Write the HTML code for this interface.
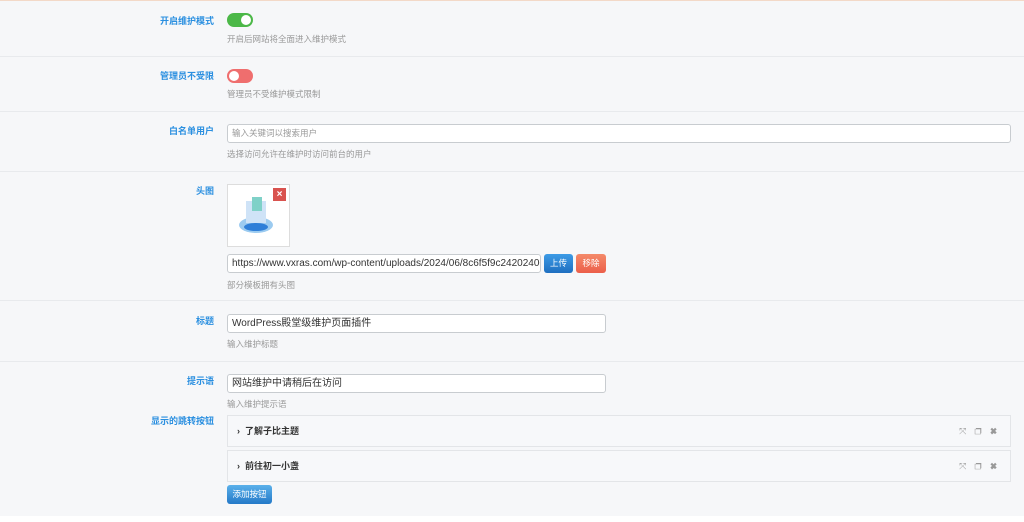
<!DOCTYPE html><html><head><meta charset="utf-8"><style>
*{margin:0;padding:0;box-sizing:border-box}
body{width:1024px;height:521px;background:#f6f7f9;font-family:"Liberation Sans","Noto Sans CJK SC",sans-serif;position:relative;overflow:hidden;border-top:1px solid #f3d9c8}
.a{position:absolute}
.lb{position:absolute;right:810px;font-size:9px;color:#2a8fe0;font-weight:bold;text-align:right;white-space:nowrap}
.ds{position:absolute;left:227px;font-size:8.5px;color:#999}
.hr{position:absolute;left:0;width:1024px;height:1px;background:#e8eaed}
.sw{position:absolute;left:227px;width:26px;height:14px;border-radius:7px}
.sw i{position:absolute;top:2px;width:10px;height:10px;border-radius:50%;background:#fff}
.in{position:absolute;left:227px;height:19px;border:1px solid #c8ccd0;border-radius:3px;background:#fff;font-size:10px;color:#333;padding:0 4px;line-height:17px;white-space:nowrap;overflow:hidden}
.box{position:absolute;left:227px;width:784px;height:32px;border:1px solid #e3e5e8;background:#f7f8fa;font-size:9px;font-weight:bold;color:#333;padding-left:9px;line-height:30px}
.ic{position:absolute;right:10px;top:0;font-size:9px;color:#999;font-weight:normal;letter-spacing:3px}
.bt{position:absolute;height:19px;border-radius:3px;color:#fff;font-size:8.5px;text-align:center;line-height:19px}
</style></head><body>
<div class="lb" style="top:13px">开启维护模式</div>
<div class="sw" style="top:12px;background:#4cb848"><i style="right:2px"></i></div>
<div class="ds" style="top:32px">开启后网站将全面进入维护模式</div>
<div class="hr" style="top:55px"></div>
<div class="lb" style="top:68px">管理员不受限</div>
<div class="sw" style="top:68px;background:#ef6e6e"><i style="left:2px"></i></div>
<div class="ds" style="top:87px">管理员不受维护模式限制</div>
<div class="hr" style="top:110px"></div>
<div class="lb" style="top:123px">白名单用户</div>
<div class="in" style="top:123px;width:784px;color:#999;font-size:8.5px">输入关键词以搜索用户</div>
<div class="ds" style="top:147px">选择访问允许在维护时访问前台的用户</div>
<div class="hr" style="top:170px"></div>
<div class="lb" style="top:183px">头图</div>
<div class="a" style="left:227px;top:183px;width:63px;height:63px;border:1px solid #ddd;background:#fff">
<svg width="61" height="61" viewBox="0 0 61 61"><ellipse cx="28" cy="40" rx="17" ry="8" fill="#5aa9e6" opacity=".6"/><rect x="18" y="16" width="20" height="22" fill="#cfe3f7"/><rect x="24" y="12" width="10" height="14" fill="#7fd1c8"/><ellipse cx="28" cy="42" rx="12" ry="4" fill="#2f7fd8"/></svg>
<div class="a" style="right:3px;top:3px;width:13px;height:13px;background:#d9534f;color:#fff;font-size:10px;line-height:13px;text-align:center;font-weight:bold">×</div></div>
<div class="in" style="top:253px;width:314px">https://www.vxras.com/wp-content/uploads/2024/06/8c6f5f9c2420240617064</div>
<div class="bt" style="left:544px;top:253px;width:29px;background:linear-gradient(#3d9be6,#1f6fc0)">上传</div>
<div class="bt" style="left:576px;top:253px;width:30px;background:linear-gradient(#f48a6a,#ec5f4a)">移除</div>
<div class="ds" style="top:278px">部分模板拥有头图</div>
<div class="hr" style="top:299px"></div>
<div class="lb" style="top:313px">标题</div>
<div class="in" style="top:313px;width:379px">WordPress殿堂级维护页面插件</div>
<div class="ds" style="top:337px">输入维护标题</div>
<div class="hr" style="top:360px"></div>
<div class="lb" style="top:373px">提示语</div>
<div class="in" style="top:373px;width:379px">网站维护中请稍后在访问</div>
<div class="ds" style="top:397px">输入维护提示语</div>
<div class="lb" style="top:413px">显示的跳转按钮</div>
<div class="box" style="top:414px">› &nbsp;了解子比主题<span class="ic">⤧ ❐ ✖</span></div>
<div class="box" style="top:449px">› &nbsp;前往初一小盏<span class="ic">⤧ ❐ ✖</span></div>
<div class="bt" style="left:227px;top:484px;width:45px;background:linear-gradient(#5ab0ea,#2479c8)">添加按钮</div>
<div class="a" style="left:0;top:515px;width:1024px;height:6px;background:#fff"></div>
</body></html>
